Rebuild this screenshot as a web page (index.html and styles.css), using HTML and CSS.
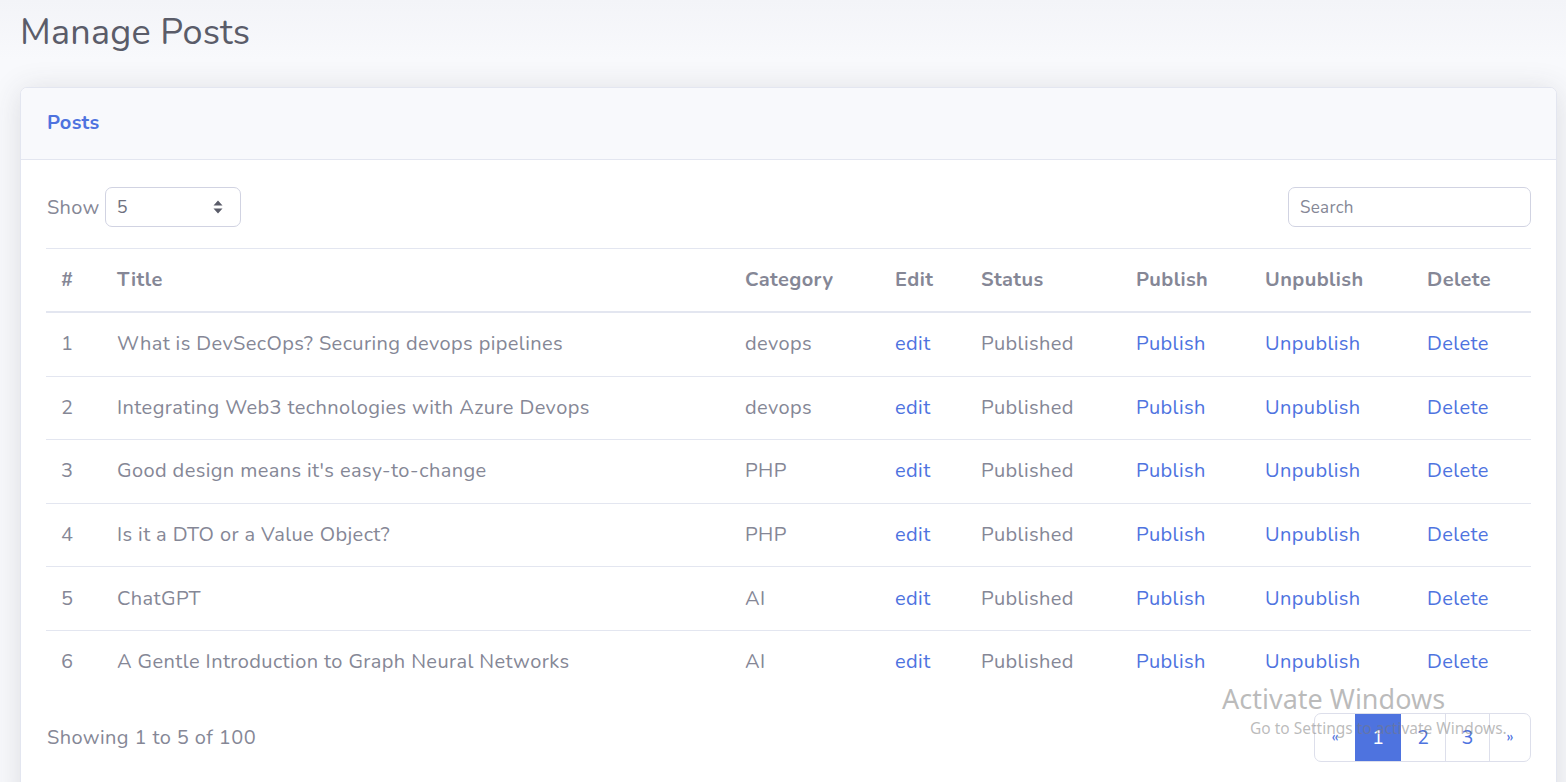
FILE: index.html
```html
<!DOCTYPE html>
<html>
<head>
<meta charset="utf-8">
<title>Manage Posts</title>
<link rel="stylesheet" href="styles.css">
</head>
<body>
<div class="page">
  <h1 class="page-title">Manage Posts</h1>
  <div class="card">
    <div class="card-header"><h6>Posts</h6></div>
    <div class="card-body">
      <div class="controls">
        <label class="show">Show
          <span class="select">5
            <svg class="arrows" width="12" height="16" viewBox="0 0 12 16"><path d="M1.5 6.5 L6 1.5 L10.5 6.5 Z M1.5 9.5 L6 14.5 L10.5 9.5 Z" fill="#5a5c69"/></svg>
          </span>
        </label>
        <span class="search">Search</span>
      </div>
      <table class="table">
        <colgroup>
          <col style="width:56px"><col style="width:628px"><col style="width:150px"><col style="width:86px"><col style="width:155px"><col style="width:129px"><col style="width:162px"><col style="width:119px">
        </colgroup>
        <thead>
          <tr><th>#</th><th>Title</th><th>Category</th><th>Edit</th><th>Status</th><th>Publish</th><th>Unpublish</th><th>Delete</th></tr>
        </thead>
        <tbody>
          <tr><td>1</td><td>What is DevSecOps? Securing devops pipelines</td><td>devops</td><td><a>edit</a></td><td>Published</td><td><a>Publish</a></td><td><a>Unpublish</a></td><td><a>Delete</a></td></tr>
          <tr><td>2</td><td>Integrating Web3 technologies with Azure Devops</td><td>devops</td><td><a>edit</a></td><td>Published</td><td><a>Publish</a></td><td><a>Unpublish</a></td><td><a>Delete</a></td></tr>
          <tr><td>3</td><td>Good design means it's easy-to-change</td><td>PHP</td><td><a>edit</a></td><td>Published</td><td><a>Publish</a></td><td><a>Unpublish</a></td><td><a>Delete</a></td></tr>
          <tr><td>4</td><td>Is it a DTO or a Value Object?</td><td>PHP</td><td><a>edit</a></td><td>Published</td><td><a>Publish</a></td><td><a>Unpublish</a></td><td><a>Delete</a></td></tr>
          <tr><td>5</td><td>ChatGPT</td><td>AI</td><td><a>edit</a></td><td>Published</td><td><a>Publish</a></td><td><a>Unpublish</a></td><td><a>Delete</a></td></tr>
          <tr><td>6</td><td>A Gentle Introduction to Graph Neural Networks</td><td>AI</td><td><a>edit</a></td><td>Published</td><td><a>Publish</a></td><td><a>Unpublish</a></td><td><a>Delete</a></td></tr>
        </tbody>
      </table>
      <div class="footer">
        <span class="info">Showing 1 to 5 of 100</span>
        <ul class="pagination">
          <li class="pg arrow first">&laquo;</li>
          <li class="pg active">1</li>
          <li class="pg">2</li>
          <li class="pg">3</li>
          <li class="pg arrow last">&raquo;</li>
        </ul>
      </div>
    </div>
  </div>
</div>
<div class="watermark">
  <div class="wm-title">Activate Windows</div>
  <div class="wm-sub">Go to Settings to activate Windows.</div>
</div>
</body>
</html>
```

FILE: styles.css
```css
html, body {
  margin: 0;
  padding: 0;
  height: 100%;
  overflow: hidden;
}
body {
  background: linear-gradient(#f3f4f8 0px, #f8f9fc 60px);
  font-family: "Nunito", Lato, "Noto Sans", sans-serif;
  color: #858796;
  font-size: 20px;
}
.page {
  padding: 0 9px 0 20px;
}
.page-title {
  margin: 0;
  height: 87px;
  padding-top: 11px;
  box-sizing: border-box;
  font-size: 36px;
  font-weight: 400;
  line-height: 1.2;
  letter-spacing: 0.2px;
  color: #5a5c69;
}
.card {
  background: #fff;
  border: 1px solid #e3e6f0;
  border-radius: 7px;
  box-shadow: 0 3px 30px 0 rgba(58, 59, 69, 0.15);
  overflow: hidden;
  min-height: 720px;
}
.card-header {
  background: #f8f9fc;
  border-bottom: 1px solid #e3e6f0;
  height: 71px;
  display: flex;
  align-items: center;
  padding: 0 26px;
}
.card-header h6 {
  margin: 0;
  font-size: 20px;
  font-weight: 700;
  color: #4e73df;
  letter-spacing: 0.3px;
  position: relative;
  top: -1px;
}
.card-body {
  padding: 27px 25px 0 25px;
}
.controls {
  display: flex;
  justify-content: space-between;
  align-items: center;
  margin-bottom: 21px;
}
.show {
  display: flex;
  align-items: center;
  gap: 6px;
  padding-left: 1px;
  letter-spacing: 0.3px;
}
.select {
  width: 136px;
  height: 40px;
  box-sizing: border-box;
  border: 1px solid #d1d3e2;
  border-radius: 7px;
  display: flex;
  align-items: center;
  justify-content: space-between;
  padding: 0 16px 0 11px;
  margin-left: -1px;
  font-size: 18px;
  color: #6e707e;
}
.search {
  width: 243px;
  height: 40px;
  box-sizing: border-box;
  border: 1px solid #d1d3e2;
  border-radius: 7px;
  display: flex;
  align-items: center;
  padding: 0 11px;
  font-size: 17px;
  letter-spacing: 0.3px;
  color: #858796;
}
.table {
  width: 100%;
  border-collapse: collapse;
  table-layout: fixed;
}
.table th, .table td {
  text-align: left;
  padding: 0 15px;
  height: 62.6px;
  line-height: 30px;
  vertical-align: middle;
  white-space: nowrap;
  letter-spacing: 0.4px;
  border-top: 1px solid #e3e6f0;
}
.table th {
  font-weight: 700;
  border-bottom: 2px solid #e3e6f0;
}
.table thead tr th {
  height: 62px;
}
.table tbody tr:first-child td {
  border-top: none;
}
.table a {
  color: #4e73df;
}
.footer {
  display: flex;
  justify-content: space-between;
  align-items: center;
  margin-top: 19px;
}
.info {
  letter-spacing: 0.4px;
  padding-left: 1px;
}
.pagination {
  list-style: none;
  margin: 0;
  padding: 0;
  display: flex;
  border: 1px solid #dddfeb;
  border-radius: 7px;
  overflow: hidden;
  height: 49px;
  box-sizing: border-box;
}
.pg {
  box-sizing: border-box;
  width: 44px;
  display: flex;
  align-items: center;
  justify-content: center;
  color: #4e73df;
  border-left: 1px solid #dddfeb;
  font-size: 20px;
}
.pg.first {
  border-left: none;
  width: 40px;
}
.pg.last {
  width: 41px;
}
.pg.active {
  background: #4e73df;
  color: #fff;
  border-left: none;
  width: 46px;
}
.pg.active + .pg {
  border-left: none;
}
.pg.arrow {
  font-size: 16px;
}
.watermark {
  position: absolute;
  left: 1222px;
  top: 683px;
  color: rgba(120, 120, 120, 0.5);
  font-family: "Noto Sans", "Open Sans", sans-serif;
  pointer-events: none;
}
.wm-title {
  font-size: 27px;
  line-height: 32px;
}
.wm-sub {
  font-size: 15.5px;
  line-height: 24px;
  padding-left: 28px;
  margin-top: 1px;
}
```
